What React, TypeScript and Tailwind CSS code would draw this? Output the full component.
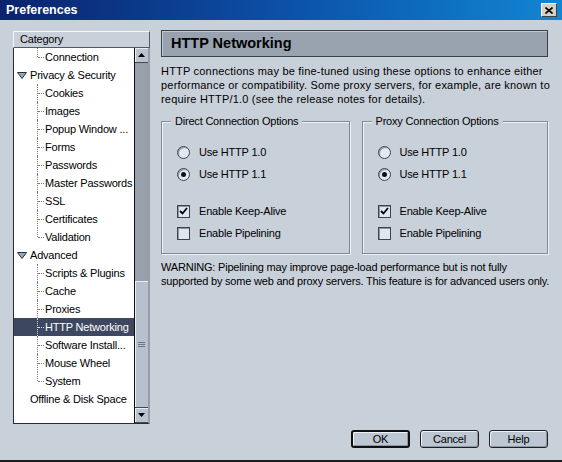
import clsx from "clsx";

type Node = {
  label: string;
  kind: "top" | "parent" | "child";
  last?: boolean;
  selected?: boolean;
};

const tree: Node[] = [
  { label: "Connection", kind: "child", last: true },
  { label: "Privacy & Security", kind: "parent" },
  { label: "Cookies", kind: "child" },
  { label: "Images", kind: "child" },
  { label: "Popup Window ...", kind: "child" },
  { label: "Forms", kind: "child" },
  { label: "Passwords", kind: "child" },
  { label: "Master Passwords", kind: "child" },
  { label: "SSL", kind: "child" },
  { label: "Certificates", kind: "child" },
  { label: "Validation", kind: "child", last: true },
  { label: "Advanced", kind: "parent" },
  { label: "Scripts & Plugins", kind: "child" },
  { label: "Cache", kind: "child" },
  { label: "Proxies", kind: "child" },
  { label: "HTTP Networking", kind: "child", selected: true },
  { label: "Software Install...", kind: "child" },
  { label: "Mouse Wheel", kind: "child" },
  { label: "System", kind: "child", last: true },
  { label: "Offline & Disk Space", kind: "top" },
];

function TreeRow({ node }: { node: Node }) {
  return (
    <div
      className={clsx(
        "relative h-[18px] flex items-center whitespace-nowrap",
        node.selected ? "bg-[#3d4860] text-white" : "text-black"
      )}
    >
      {node.kind === "child" && (
        <>
          <div
            className={clsx(
              "absolute left-[23px] top-0 w-0 border-l border-dotted",
              node.last ? "h-[9px]" : "h-full",
              node.selected ? "border-[#d0d8e0]" : "border-[#808080]"
            )}
          />
          <div
            className={clsx(
              "absolute left-[24px] top-[9px] w-[6px] h-0 border-t border-dotted",
              node.selected ? "border-[#d0d8e0]" : "border-[#808080]"
            )}
          />
          <span className="pl-[31px]">{node.label}</span>
        </>
      )}
      {node.kind === "parent" && (
        <>
          <svg width="10" height="7" viewBox="0 0 10 7" className="ml-[3px]">
            <polygon points="0.5,0.5 9.5,0.5 5,6.5" fill="#98a6bc" stroke="#28303c" />
          </svg>
          <span className="ml-[3px]">{node.label}</span>
        </>
      )}
      {node.kind === "top" && <span className="pl-[16px]">{node.label}</span>}
    </div>
  );
}

function Arrow({ down }: { down?: boolean }) {
  return (
    <div className="h-[15px] bg-[#b9c4d0] border-b border-[#404850] shadow-[inset_1px_1px_0_#e8eef4] flex items-center justify-center">
      <svg width="7" height="4" viewBox="0 0 7 4">
        <polygon points={down ? "0,0 7,0 3.5,4" : "0,4 7,4 3.5,0"} fill="#000" />
      </svg>
    </div>
  );
}

function Radio({ checked, label }: { checked?: boolean; label: string }) {
  return (
    <div className="flex items-center h-[16px] gap-[9px]">
      <div className="w-[13px] h-[13px] rounded-full border border-[#3c4450] bg-[#e2e9f0] shadow-[inset_1px_1px_0_#8c96a4] flex items-center justify-center">
        {checked && <div className="w-[5px] h-[5px] rounded-full bg-[#101010]" />}
      </div>
      <span>{label}</span>
    </div>
  );
}

function Check({ checked, label }: { checked?: boolean; label: string }) {
  return (
    <div className="flex items-center h-[16px] gap-[9px]">
      <div className="w-[13px] h-[13px] border border-[#3c4450] bg-[#dfe6ee] shadow-[inset_1px_1px_0_#8c96a4] flex items-center justify-center">
        {checked && (
          <svg width="9" height="8" viewBox="0 0 9 8">
            <polyline points="1,4 3.5,6.5 8,1" fill="none" stroke="#000" strokeWidth="1.8" />
          </svg>
        )}
      </div>
      <span>{label}</span>
    </div>
  );
}

function Group({ title, width }: { title: string; width: string }) {
  return (
    <div
      className={clsx(
        "relative h-[133px] border border-[#808a96] shadow-[1px_1px_0_#eef2f6,inset_1px_1px_0_#eef2f6] pt-[22px] pl-[15px]",
        width
      )}
    >
      <span className="absolute -top-[8px] left-[9px] px-[4px] bg-[#c8d0d9] leading-[14px]">
        {title}
      </span>
      <div className="flex flex-col gap-[6px]">
        <Radio label="Use HTTP 1.0" />
        <Radio checked label="Use HTTP 1.1" />
      </div>
      <div className="flex flex-col gap-[6px] mt-[21px]">
        <Check checked label="Enable Keep-Alive" />
        <Check label="Enable Pipelining" />
      </div>
    </div>
  );
}

function Btn({ label, primary }: { label: string; primary?: boolean }) {
  return (
    <div
      className={clsx(
        "w-[59px] h-[18px] rounded-[3px] bg-[#bcc7d2] flex items-center justify-center shadow-[inset_1px_1px_0_#eef2f6,inset_-1px_-1px_0_#8c96a4]",
        primary ? "border-2 border-[#101010]" : "border border-[#202020]"
      )}
    >
      {label}
    </div>
  );
}

export default function App() {
  return (
    <div className="w-[562px] h-[462px] bg-[#c8d0d9] border-b-2 border-[#1c1c1c] flex flex-col font-['Liberation_Sans',Arial,sans-serif] text-[11px] tracking-[-0.2px] text-black overflow-hidden">
      {/* title bar */}
      <div className="h-[20px] shrink-0 bg-gradient-to-r from-[#0a236c] via-[#0c50a8] to-[#1286d2] flex items-center justify-between pl-[6px] pr-[5px]">
        <span className="text-white font-bold text-[12.5px] tracking-normal">Preferences</span>
        <div className="w-[16px] h-[14px] bg-[#d4d0c8] border border-t-white border-l-white border-r-[#404040] border-b-[#404040] flex items-center justify-center">
          <svg width="8" height="7" viewBox="0 0 8 7">
            <path d="M0.5 0.5 L7.5 6.5 M7.5 0.5 L0.5 6.5" stroke="#000" strokeWidth="1.6" />
          </svg>
        </div>
      </div>

      <div className="flex flex-col pt-[10px] pl-[13px] pr-[14px]">
        <div className="flex gap-[11px] h-[395px]">
          {/* category tree */}
          <div className="w-[137px] mt-[1px] flex flex-col">
            <div className="h-[17px] shrink-0 bg-[#c8d0d9] border-t border-l border-[#f4f6f8] border-r border-b border-r-[#505a66] border-b-[#505a66] flex items-center pl-[6px]">
              Category
            </div>
            <div className="h-[376px] flex border-l border-b border-[#2a2e34] border-r-2 border-r-[#949ea8]">
              <div className="flex-1 bg-white">
                {tree.map((n) => (
                  <TreeRow key={n.label} node={n} />
                ))}
              </div>
              <div className="w-[14px] border-l border-[#101010] bg-[#98a1ab] flex flex-col">
                <Arrow />
                <div className="flex-1 flex flex-col">
                  <div className="h-[218px]" />
                  <div className="flex-1 bg-[#b6c1cd] border-b border-[#404850] shadow-[inset_1px_1px_0_#e8eef4] flex items-center justify-center">
                    <div className="flex flex-col gap-[1px]">
                      <div className="w-[7px] h-[1px] bg-[#6c7684]" />
                      <div className="w-[7px] h-[1px] bg-[#6c7684]" />
                      <div className="w-[7px] h-[1px] bg-[#6c7684]" />
                    </div>
                  </div>
                </div>
                <Arrow down />
              </div>
            </div>
          </div>

          {/* content */}
          <div className="w-[387px] flex flex-col">
            <div className="h-[27px] shrink-0 bg-[#98a3af] border border-[#384048] shadow-[inset_1px_1px_0_#c0c8d2] flex items-center pl-[9px]">
              <span className="font-bold text-[14.5px] tracking-normal">HTTP Networking</span>
            </div>
            <p className="mt-[7px] leading-[14px] whitespace-nowrap tracking-[0.2px]">
              HTTP connections may be fine-tuned using these options to enhance either
              <br />
              performance or compatibility. Some proxy servers, for example, are known to
              <br />
              require HTTP/1.0 (see the release notes for details).
            </p>
            <div className="flex gap-[12px] mt-[15px]">
              <Group title="Direct Connection Options" width="w-[189px]" />
              <Group title="Proxy Connection Options" width="w-[187px]" />
            </div>
            <p className="mt-[6px] leading-[14px] whitespace-nowrap">
              WARNING: Pipelining may improve page-load performance but is not fully
              <br />
              supported by some web and proxy servers. This feature is for advanced users only.
            </p>
          </div>
        </div>

        <div className="flex justify-end gap-[10px] mt-[5px]">
          <Btn label="OK" primary />
          <Btn label="Cancel" />
          <Btn label="Help" />
        </div>
      </div>
    </div>
  );
}
